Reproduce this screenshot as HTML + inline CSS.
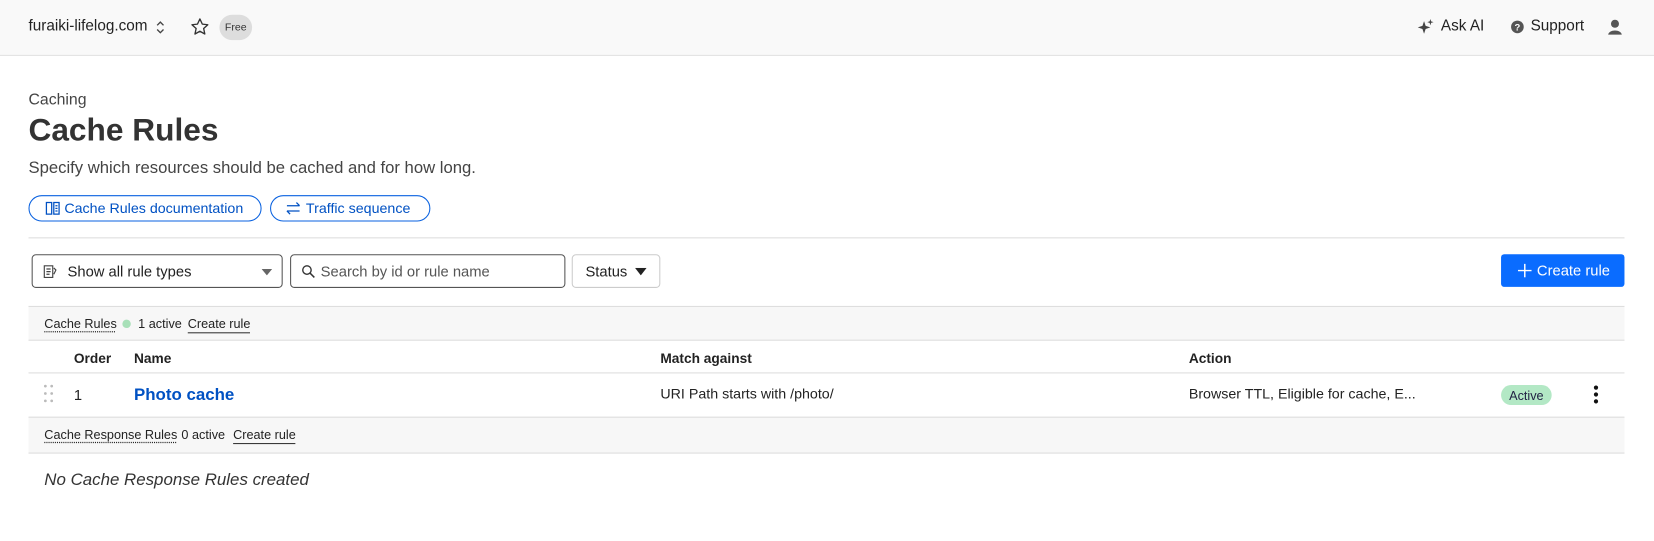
<!DOCTYPE html>
<html><head><meta charset="utf-8"><style>
*{box-sizing:border-box;margin:0;padding:0}
html,body{width:1654px;height:541px;overflow:hidden;background:#fff}
#w{position:absolute;left:0;top:0;width:1568px;height:513px;transform:scale(1.05485);transform-origin:0 0;font-family:"Liberation Sans",sans-serif;color:#222}
.a{position:absolute;white-space:nowrap}
.hdr{position:absolute;left:0;top:0;width:1568px;height:53px;background:#f9f9f9;border-bottom:1px solid #e2e2e2}
.pill{position:absolute;top:185px;height:25px;border:1px solid #0a62e0;border-radius:13px;color:#0051c3;font-size:13.5px;line-height:23px;padding-left:14px}
.box{position:absolute;top:241px;height:32px;border:1px solid #555;border-radius:4px;font-size:14px;line-height:30px}
.bar{position:absolute;left:27px;width:1513px;background:#f7f7f7;border-top:1px solid #ddd;border-bottom:1px solid #ddd;font-size:12px}
.dot{text-decoration:underline dotted;text-underline-offset:3px}
.ul{border-bottom:1px solid #333;padding-bottom:1px}
</style></head><body><div id="w">
<div class="hdr"></div>
<div class="a" style="left:27px;top:17px;font-size:14.5px">furaiki-lifelog.com</div>
<svg class="a" style="left:147px;top:18px" width="10" height="16" viewBox="0 0 10 16"><path d="M2 6 L5 3 L8 6 M2 10 L5 13 L8 10" fill="none" stroke="#444" stroke-width="1.3"/></svg>
<svg class="a" style="left:180px;top:16px" width="19" height="19" viewBox="0 0 24 24"><path d="M12 2.5l2.9 6.2 6.6.7-5 4.5 1.4 6.6L12 17.2l-5.9 3.3 1.4-6.6-5-4.5 6.6-.7z" fill="none" stroke="#333" stroke-width="1.6" stroke-linejoin="round"/></svg>
<div class="a" style="left:208px;top:14px;width:31px;height:24px;border-radius:12px;background:#ddd;font-size:10px;display:flex;align-items:center;justify-content:center;color:#333">Free</div>
<svg class="a" style="left:1344px;top:17px" width="16" height="16" viewBox="0 0 16 16"><path d="M6 3 L7.5 7.5 L12 9 L7.5 10.5 L6 15 L4.5 10.5 L0 9 L4.5 7.5Z" fill="#444"/><path d="M12 1 L12.7 3.3 L15 4 L12.7 4.7 L12 7 L11.3 4.7 L9 4 L11.3 3.3Z" fill="#444"/></svg>
<div class="a" style="left:1366px;top:17px;font-size:14.5px">Ask AI</div>
<svg class="a" style="left:1432px;top:19px" width="13" height="13" viewBox="0 0 13 13"><circle cx="6.5" cy="6.5" r="6" fill="#555"/><text x="6.5" y="10" font-size="9" fill="#fff" text-anchor="middle" font-family="Liberation Sans" font-weight="bold">?</text></svg>
<div class="a" style="left:1451px;top:17px;font-size:14.5px">Support</div>
<svg class="a" style="left:1524px;top:18px" width="14" height="15" viewBox="0 0 14 15"><circle cx="7" cy="4.5" r="3.8" fill="#555"/><path d="M0.5 15 C1 9.5 13 9.5 13.5 15Z" fill="#555"/></svg>

<div class="a" style="left:27px;top:86px;font-size:15px;color:#444">Caching</div>
<div class="a" style="left:27px;top:107px;font-size:30px;font-weight:bold;color:#333">Cache Rules</div>
<div class="a" style="left:27px;top:151px;font-size:15.8px;color:#444">Specify which resources should be cached and for how long.</div>
<div class="pill" style="left:27px;width:221px"><svg style="position:absolute;left:15px;top:5px" width="14" height="13" viewBox="0 0 14 13"><path d="M1 1h5v11H1zM8 1h5v11H8zM9.5 4h2M9.5 6.5h2M9.5 9h2" fill="none" stroke="#0051c3" stroke-width="1.2"/></svg><span style="position:absolute;left:33px">Cache Rules documentation</span></div>
<div class="pill" style="left:256px;width:152px"><svg style="position:absolute;left:14px;top:5px" width="14" height="13" viewBox="0 0 14 13"><path d="M1 4h12M10 1l3 3M13 9H1M4 12L1 9" fill="none" stroke="#0051c3" stroke-width="1.2"/></svg><span style="position:absolute;left:33px">Traffic sequence</span></div>
<div class="a" style="left:27px;top:225px;width:1513px;height:1px;background:#ddd"></div>

<div class="box" style="left:30px;width:238px"><svg style="position:absolute;left:10px;top:9px" width="13" height="13" viewBox="0 0 13 13"><path d="M1 1h8v11H1zM3 4h4M3 6.5h4M3 9h3M10 3l2 2-2 4" fill="none" stroke="#444" stroke-width="1.1"/></svg><span style="position:absolute;left:33px">Show all rule types</span><svg style="position:absolute;left:217px;top:13px" width="10" height="6"><path d="M0 0h10L5 6z" fill="#666"/></svg></div>
<div class="box" style="left:275px;width:261px"><svg style="position:absolute;left:10px;top:9px" width="13" height="13" viewBox="0 0 13 13"><circle cx="5" cy="5" r="4" fill="none" stroke="#333" stroke-width="1.3"/><path d="M8 8l4 4" stroke="#333" stroke-width="1.4"/></svg><span style="position:absolute;left:28px;color:#555">Search by id or rule name</span></div>
<div class="box" style="left:542px;width:84px;border-color:#ccc"><span style="position:absolute;left:12px">Status</span><svg style="position:absolute;left:59px;top:12px" width="11" height="7"><path d="M0 0h11L5.5 7z" fill="#222"/></svg></div>
<div class="a" style="left:1423px;top:241px;width:117px;height:31px;background:#0a6cff;border-radius:3px;color:#fff;font-size:14px;line-height:31px"><svg style="position:absolute;left:16px;top:9px" width="13" height="13"><path d="M6.5 0v13M0 6.5h13" stroke="#fff" stroke-width="1.4"/></svg><span style="position:absolute;left:34px">Create rule</span></div>

<div class="bar" style="top:290px;height:33px"><span class="a dot" style="left:15px;top:9px">Cache Rules</span><span class="a" style="left:89px;top:12px;width:8px;height:8px;border-radius:4px;background:#a8e0b8"></span><span class="a" style="left:104px;top:9px">1 active</span><span class="a ul" style="left:151px;top:9px">Create rule</span></div>
<div class="a" style="left:70px;top:332px;font-size:13px;font-weight:bold;color:#222">Order</div>
<div class="a" style="left:127px;top:332px;font-size:13px;font-weight:bold">Name</div>
<div class="a" style="left:626px;top:332px;font-size:13px;font-weight:bold">Match against</div>
<div class="a" style="left:1127px;top:332px;font-size:13px;font-weight:bold">Action</div>
<div class="a" style="left:27px;top:353px;width:1513px;height:1px;background:#ddd"></div>
<svg class="a" style="left:41px;top:364px" width="10" height="20"><g fill="#bbb"><circle cx="2" cy="2" r="1.3"/><circle cx="8" cy="2" r="1.3"/><circle cx="2" cy="9" r="1.3"/><circle cx="8" cy="9" r="1.3"/><circle cx="2" cy="16" r="1.3"/><circle cx="8" cy="16" r="1.3"/></g></svg>
<div class="a" style="left:70px;top:366px;font-size:14px">1</div>
<div class="a" style="left:127px;top:366px;font-size:16px;font-weight:bold;color:#0051c3">Photo cache</div>
<div class="a" style="left:626px;top:366px;font-size:13.5px">URI Path starts with /photo/</div>
<div class="a" style="left:1127px;top:366px;font-size:13.5px">Browser TTL, Eligible for cache, E...</div>
<div class="a" style="left:1423px;top:365px;width:48px;height:19px;border-radius:10px;background:#b3e8c5;font-size:12px;display:flex;align-items:center;justify-content:center;color:#224">Active</div>
<svg class="a" style="left:1510px;top:365px" width="6" height="18"><g fill="#111"><circle cx="3" cy="2.5" r="2"/><circle cx="3" cy="9" r="2"/><circle cx="3" cy="15.5" r="2"/></g></svg>
<div class="bar" style="top:395px;height:35px"><span class="a dot" style="left:15px;top:9px">Cache Response Rules</span><span class="a" style="left:145px;top:9px">0 active</span><span class="a ul" style="left:194px;top:9px">Create rule</span></div>
<div class="a" style="left:42px;top:447px;font-size:16px;font-style:italic;color:#333">No Cache Response Rules created</div>
</div></body></html>
